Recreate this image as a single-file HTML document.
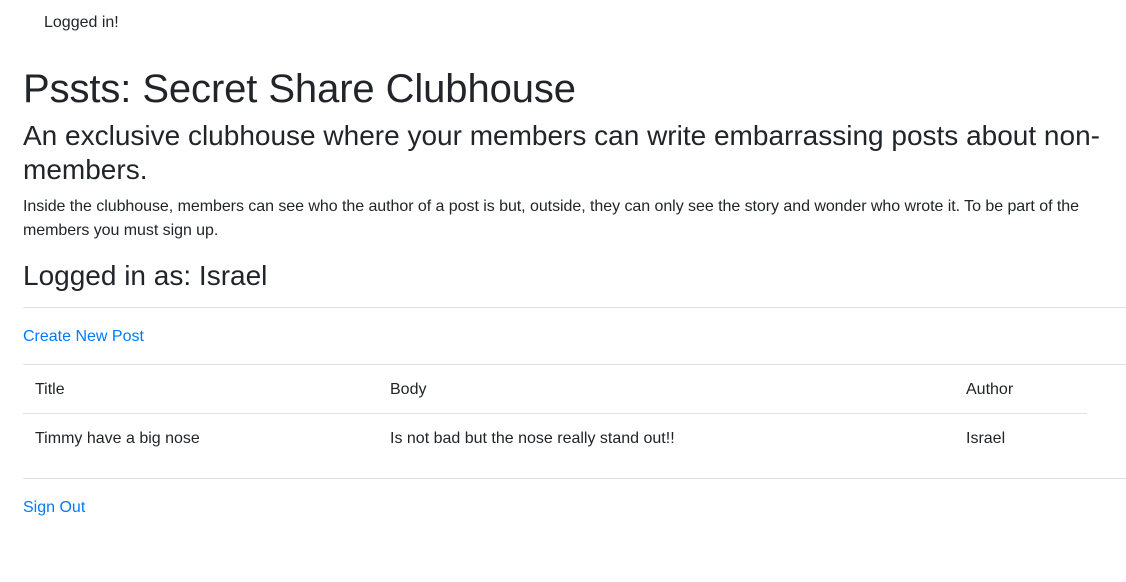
<!DOCTYPE html>
<html><head><style>
body{margin:0;width:1126px;height:582px;background:#fff;color:#212529;font-family:"Liberation Sans",Arial,sans-serif;position:relative;overflow:hidden}
div,a,hr{position:absolute;margin:0}
a{color:#007bff;text-decoration:none;font-size:16px;line-height:24px}
.hr{left:23px;width:1103px;height:1px;background:#dee2e6}
.t{font-size:16px;line-height:24px}
</style></head><body>
<div class="t" style="left:44px;top:11px">Logged in!</div>
<div style="left:23px;top:65px;font-size:40px;line-height:48px;letter-spacing:-0.1px">Pssts: Secret Share Clubhouse</div>
<div style="left:23px;top:119px;width:1100px;font-size:28px;line-height:34px">An exclusive clubhouse where your members can write embarrassing posts about non-members.</div>
<div class="t" style="left:23px;top:195px;width:1090px;letter-spacing:-0.05px">Inside the clubhouse, members can see who the author of a post is but, outside, they can only see the story and wonder who wrote it. To be part of the members you must sign up.</div>
<div style="left:23px;top:259px;font-size:28px;line-height:34px">Logged in as: Israel</div>
<div class="hr" style="top:307px"></div>
<a style="left:23px;top:325px">Create New Post</a>
<div class="hr" style="top:364px"></div>
<div class="t" style="left:35px;top:378px">Title</div>
<div class="t" style="left:390px;top:378px">Body</div>
<div class="t" style="left:966px;top:378px">Author</div>
<div class="hr" style="top:413px;width:1064px"></div>
<div class="t" style="left:35px;top:427px">Timmy have a big nose</div>
<div class="t" style="left:390px;top:427px">Is not bad but the nose really stand out!!</div>
<div class="t" style="left:966px;top:427px">Israel</div>
<div class="hr" style="top:478px"></div>
<a style="left:23px;top:496px">Sign Out</a>
</body></html>
